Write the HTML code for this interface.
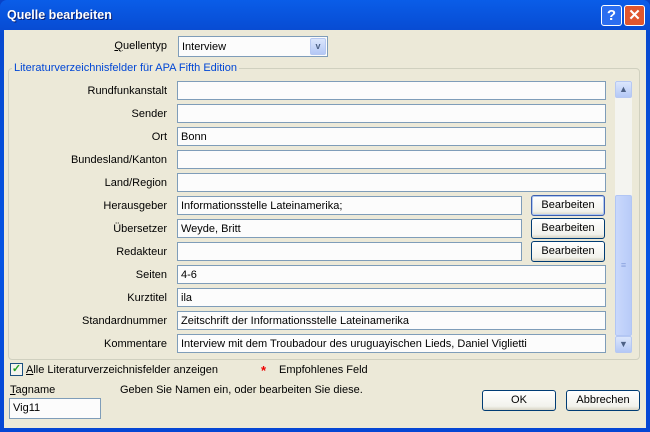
<!DOCTYPE html>
<html><head><meta charset="utf-8"><style>
*{box-sizing:border-box;margin:0;padding:0}
body{width:650px;height:432px;overflow:hidden;font-family:"Liberation Sans",sans-serif;font-size:11px;color:#000;background:#0842c8;position:relative}
.win{position:absolute;left:0;top:0;width:650px;height:432px;background:linear-gradient(#0a5de8,#0749d0 8%,#0554e3 60%,#0546d4);border-radius:7px 7px 0 0}
.body{position:absolute;left:4px;top:30px;width:642px;height:398px;background:#ECE9D8}
.title{position:absolute;left:7px;top:8px;color:#fff;font-weight:bold;font-size:12.5px;text-shadow:1px 1px #0a1f6e}
.tb{position:absolute;top:5px;width:21px;height:21px;border:1px solid #fff;border-radius:3px;color:#fff;font-weight:bold;font-size:15px;text-align:center;line-height:19px}
.abs{position:absolute}
.lbl{position:absolute;right:483px;text-align:right;white-space:nowrap}
.inp{position:absolute;left:177px;height:19px;border:1px solid #7f9db9;background:#fcfcfc;padding:1px 3px 0;line-height:17px;white-space:nowrap}
.btn{position:absolute;width:74px;height:21px;border:1px solid #003c74;border-radius:3px;background:linear-gradient(#fff,#f2f2ec 80%,#d8d4c4);text-align:center;line-height:19px}
</style></head><body>
<div class="win"></div>
<div class="title">Quelle bearbeiten</div>
<div class="tb" style="left:601px;background:#2b6ef0">?</div>
<div class="tb" style="left:624px;background:#e0562e">✕</div>
<div class="body"></div>
<div class="lbl" style="top:40px"><u>Q</u>uellentyp</div>
<div class="inp" style="left:178px;top:36px;width:150px;height:21px;line-height:19px">Interview</div>
<div class="abs" style="left:310px;top:38px;width:16px;height:17px;background:linear-gradient(#dbe6fc,#b4c8f6);border:1px solid #b6c8f2;border-radius:2px;color:#4d6185;font-size:9px;font-weight:bold;text-align:center;line-height:15px">v</div>
<div class="abs" style="left:8px;top:68px;width:632px;height:292px;border:1px solid #d0d0bf;border-radius:4px"></div>
<div class="abs" style="left:12px;top:62px;background:#ECE9D8;color:#0046d5;padding:0 2px">Literaturverzeichnisfelder für APA Fifth Edition</div>

<div class="lbl" style="top:85px">Rundfunkanstalt</div><div class="inp" style="top:81px;width:429px"></div>
<div class="lbl" style="top:108px">Sender</div><div class="inp" style="top:104px;width:429px"></div>
<div class="lbl" style="top:131px">Ort</div><div class="inp" style="top:127px;width:429px">Bonn</div>
<div class="lbl" style="top:154px">Bundesland/Kanton</div><div class="inp" style="top:150px;width:429px"></div>
<div class="lbl" style="top:177px">Land/Region</div><div class="inp" style="top:173px;width:429px"></div>
<div class="lbl" style="top:200px">Herausgeber</div><div class="inp" style="top:196px;width:345px">Informationsstelle Lateinamerika;</div>
<div class="btn" style="left:531px;top:195px;border-color:#3c5fb0;box-shadow:inset 0 0 0 1px #b0c8f0">Bearbeiten</div>
<div class="lbl" style="top:223px">Übersetzer</div><div class="inp" style="top:219px;width:345px">Weyde, Britt</div>
<div class="btn" style="left:531px;top:218px">Bearbeiten</div>
<div class="lbl" style="top:246px">Redakteur</div><div class="inp" style="top:242px;width:345px"></div>
<div class="btn" style="left:531px;top:241px">Bearbeiten</div>
<div class="lbl" style="top:269px">Seiten</div><div class="inp" style="top:265px;width:429px">4-6</div>
<div class="lbl" style="top:292px">Kurztitel</div><div class="inp" style="top:288px;width:429px">ila</div>
<div class="lbl" style="top:315px">Standardnummer</div><div class="inp" style="top:311px;width:429px">Zeitschrift der Informationsstelle Lateinamerika</div>
<div class="lbl" style="top:338px">Kommentare</div><div class="inp" style="top:334px;width:429px">Interview mit dem Troubadour des uruguayischen Lieds, Daniel Viglietti</div>

<div class="abs" style="left:615px;top:81px;width:17px;height:271px;background:#f4f4f0"></div>
<div class="abs" style="left:615px;top:81px;width:17px;height:17px;background:linear-gradient(#dbe6fc,#b4c8f6);border:1px solid #b6c8f2;border-radius:2px;color:#4d6185;font-size:9px;text-align:center;line-height:15px">▲</div>
<div class="abs" style="left:615px;top:195px;width:17px;height:141px;background:linear-gradient(90deg,#c9d8fc,#b8cbf8);border:1px solid #b2c6f4;border-radius:2px;color:#8aa2de;text-align:center;line-height:139px;font-size:9px">≡</div>
<div class="abs" style="left:615px;top:336px;width:17px;height:17px;background:linear-gradient(#dbe6fc,#b4c8f6);border:1px solid #b6c8f2;border-radius:2px;color:#4d6185;font-size:9px;text-align:center;line-height:15px">▼</div>

<div class="abs" style="left:10px;top:363px;width:13px;height:13px;border:1px solid #1c5180;background:#f4f4ee;color:#21a121;font-size:11px;line-height:11px;text-align:center;font-weight:bold">✓</div>
<div class="abs" style="left:26px;top:364px"><u>A</u>lle Literaturverzeichnisfelder anzeigen</div>
<div class="abs" style="left:261px;top:363px;color:#e00;font-size:13px;font-weight:bold">*</div>
<div class="abs" style="left:279px;top:364px">Empfohlenes Feld</div>
<div class="abs" style="left:10px;top:384px"><u>T</u>agname</div>
<div class="abs" style="left:120px;top:384px">Geben Sie Namen ein, oder bearbeiten Sie diese.</div>
<div class="inp" style="left:9px;top:398px;width:92px;height:21px;line-height:19px;padding-top:0">Vig11</div>
<div class="btn" style="left:482px;top:390px">OK</div>
<div class="btn" style="left:566px;top:390px">Abbrechen</div>
</body></html>
